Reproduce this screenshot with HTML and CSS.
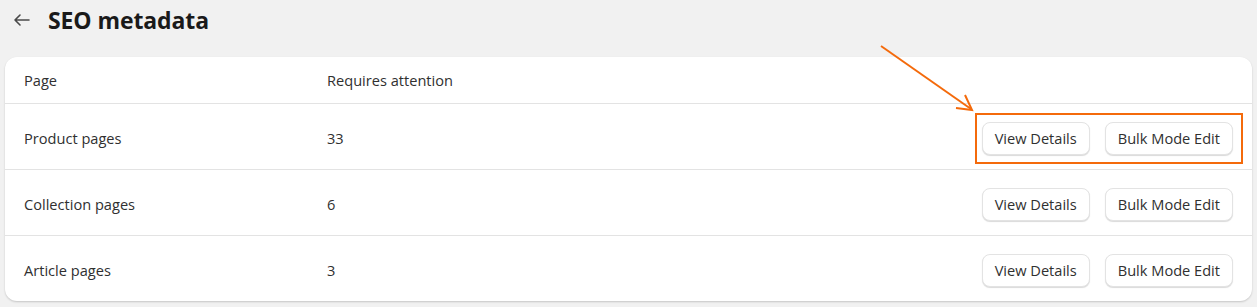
FILE: index.html
```html
<!DOCTYPE html>
<html lang="en">
<head>
    <meta charset="UTF-8">
    <title>SEO metadata</title>
    <link rel="stylesheet" href="styles.css">
</head>
<body>
    <div class="header">
        <span class="back">
            <svg width="18" height="14" viewBox="0 0 18 14"><path d="M7 2 L2 7 L7 12 M2 7 H16" fill="none" stroke="#4a4a4a" stroke-width="1.6" stroke-linecap="round" stroke-linejoin="round"/></svg>
        </span>
        <h1>SEO metadata</h1>
    </div>

    <div class="card">
        <div class="row head">
            <div class="col-page">Page</div>
            <div class="col-count">Requires attention</div>
        </div>
        <div class="row">
            <div class="col-page">Product pages</div>
            <div class="col-count">33</div>
            <div class="actions highlight">
                <button>View Details</button>
                <button>Bulk Mode Edit</button>
            </div>
        </div>
        <div class="row">
            <div class="col-page">Collection pages</div>
            <div class="col-count">6</div>
            <div class="actions">
                <button>View Details</button>
                <button>Bulk Mode Edit</button>
            </div>
        </div>
        <div class="row">
            <div class="col-page">Article pages</div>
            <div class="col-count">3</div>
            <div class="actions">
                <button>View Details</button>
                <button>Bulk Mode Edit</button>
            </div>
        </div>
    </div>

    <!-- annotation arrow -->
    <svg class="arrow" width="110" height="80" viewBox="0 0 110 80">
        <path d="M2 2 L92 65" stroke="#f46a0b" stroke-width="2" fill="none"/>
        <path d="M86 51 L93 66 L77 64" stroke="#f46a0b" stroke-width="2" fill="none"/>
    </svg>
</body>
</html>
```

FILE: styles.css
```css
body {
    margin: 0;
    background-color: #f1f1f1;
    font-family: "Open Sans", "Noto Sans", sans-serif;
    color: #303030;
    position: relative;
    height: 307px;
    overflow: hidden;
}

.header {
    display: flex;
    align-items: center;
    height: 40px;
    padding-left: 13px;
}

.back {
    display: flex;
    width: 35px;
}

h1 {
    margin: 0;
    font-size: 23px;
    font-weight: 700;
    color: #1a1a1a;
    letter-spacing: -0.1px;
}

.card {
    margin: 17px 5px 0 5px;
    background: white;
    border-radius: 12px;
    box-shadow: 0 1px 2px rgba(0, 0, 0, 0.18);
}

.row {
    display: flex;
    align-items: center;
    height: 62px;
    padding: 3px 19px 0 19px;
    border-top: 1px solid #e3e3e3;
    font-size: 14.6px;
}

.row.head {
    height: 46px;
    padding-top: 0;
    border-top: none;
}

.col-page {
    width: 303px;
}

.col-count {
    flex: 1;
}

.actions {
    display: flex;
    gap: 15px;
    position: relative;
}

.actions.highlight::after {
    content: "";
    position: absolute;
    left: -7px;
    right: -10px;
    top: -9px;
    bottom: -9px;
    border: 2px solid #f46a0b;
}

button {
    font-family: inherit;
    font-size: 14.6px;
    color: #303030;
    background: white;
    border: 1px solid #e3e3e3;
    border-radius: 8px;
    height: 33px;
    padding: 0 12px;
    box-shadow: 0 1px 1px rgba(0, 0, 0, 0.15);
}

.arrow {
    position: absolute;
    left: 879px;
    top: 44px;
}
```
